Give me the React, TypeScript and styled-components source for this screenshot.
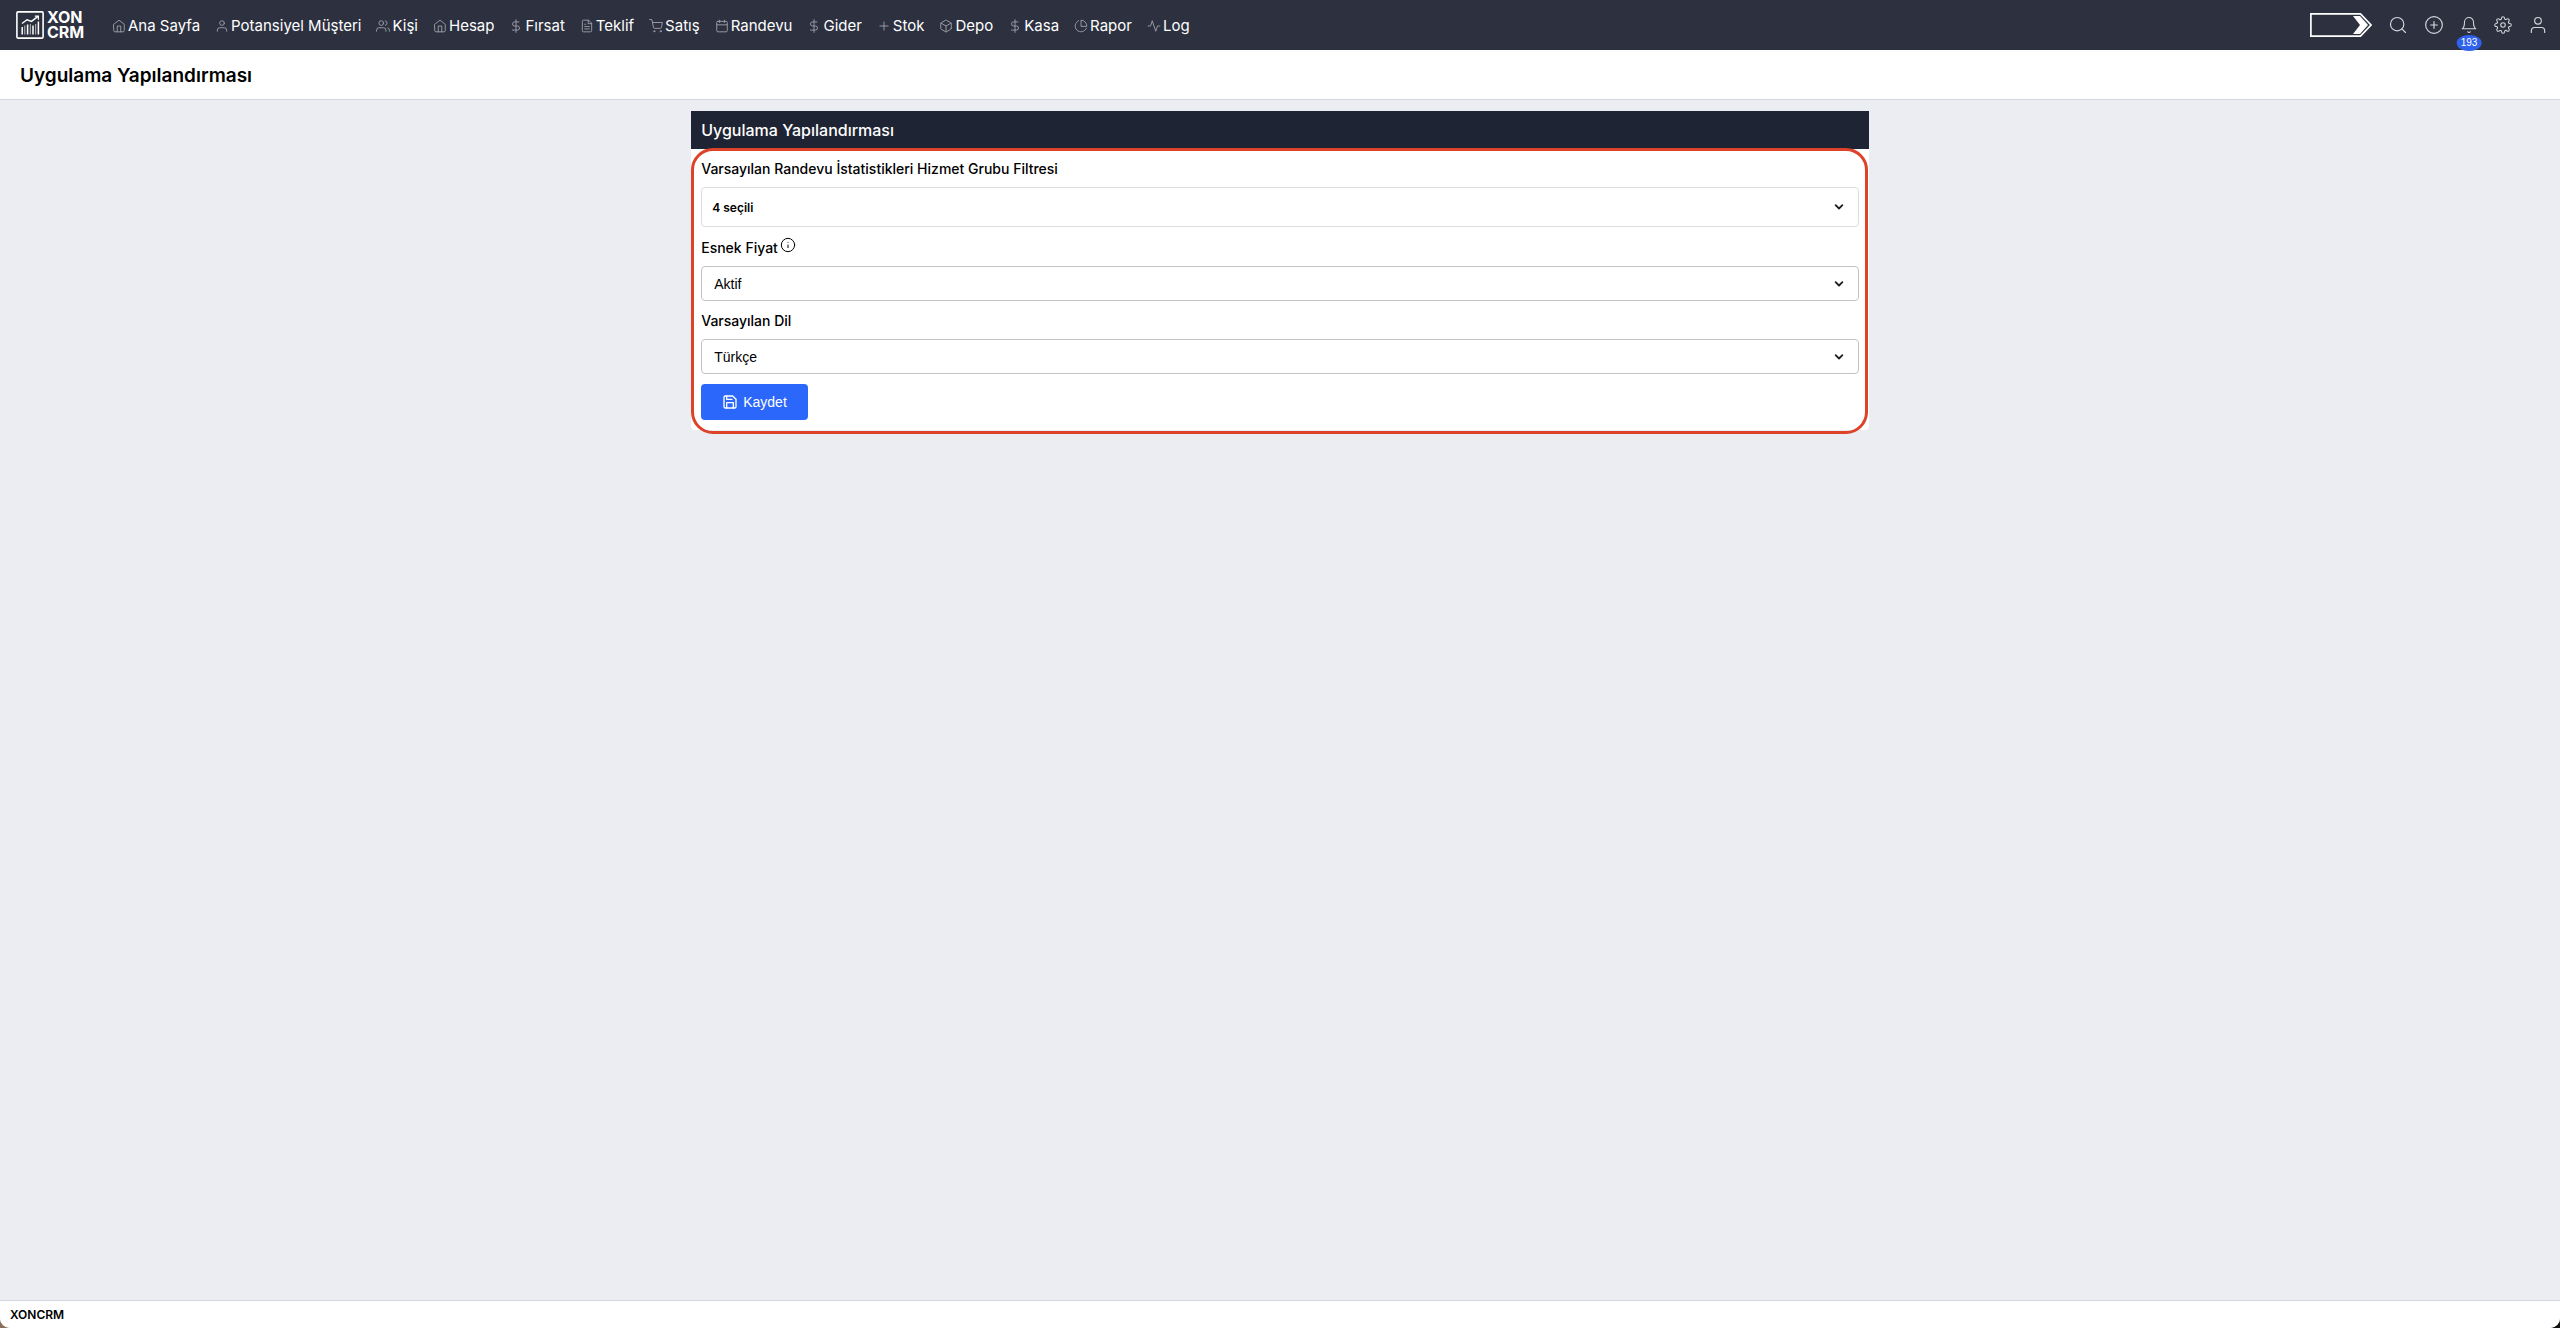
import React from "react";
import styled, { createGlobalStyle } from "styled-components";
import {
  FiHome, FiUser, FiUsers, FiDollarSign, FiFileText, FiShoppingCart, FiCalendar,
  FiPlus, FiBox, FiPieChart, FiActivity, FiSearch, FiPlusCircle, FiBell, FiSettings,
  FiInfo, FiSave,
} from "react-icons/fi";
import type { IconType } from "react-icons";

const sans = `Inter, "Noto Sans", sans-serif`;
const control = `"Liberation Sans", Arial, sans-serif`;

const GlobalStyle = createGlobalStyle`
  *, *::before, *::after { box-sizing: border-box; }
  html { background: linear-gradient(to right, #8a6f5c 50%, #14140f 50%); }
  body { margin: 0; font-family: ${sans}; color: #000; }
`;

const Page = styled.div`
  min-height: 100vh;
  display: flex;
  flex-direction: column;
  background: #ebedf2;
  border-radius: 0 0 10px 10px;
  overflow: hidden;
`;

const TopBar = styled.header`
  display: flex;
  align-items: center;
  height: 50px;
  padding: 0 12px 0 16px;
  background: #2c303f;
  color: #fff;
`;

const Brand = styled.a`
  display: flex;
  align-items: center;
  gap: 3px;
  width: 96px;
  color: #fff;
  text-decoration: none;
  font-size: 16px;
  font-weight: 700;
  line-height: 15px;
`;

const BrandName = styled.span`
  display: flex;
  flex-direction: column;
`;

const Nav = styled.nav`
  display: flex;
  flex: 1;
  gap: 15px;
  padding-top: 2px;
`;

const NavLink = styled.a`
  display: flex;
  align-items: center;
  gap: 2px;
  color: #fff;
  font-size: 15px;
  font-weight: 400;
  line-height: 20px;
  text-decoration: none;
  white-space: nowrap;

  svg { color: #a3a6ae; stroke-width: 1.5; }
`;

const Tools = styled.div`
  display: flex;
  align-items: center;
  gap: 16px;
`;

const ToolButton = styled.button`
  position: relative;
  display: flex;
  padding: 0;
  border: 0;
  background: none;
  color: #d5d7dc;

  svg { stroke-width: 1.4; }
`;

const Badge = styled.span`
  position: absolute;
  top: 19px;
  left: 50%;
  transform: translateX(-50%);
  padding: 0 4px;
  border-radius: 50%;
  background: #2f62ea;
  color: #fff;
  font-size: 10px;
  line-height: 16px;
`;

const TitleBar = styled.div`
  height: 50px;
  padding: 0 20px;
  border-bottom: 1px solid #d3d7dd;
  background: #fff;
`;

const Title = styled.h1`
  margin: 0;
  font-size: 19px;
  font-weight: 600;
  line-height: 52px;
`;

const Main = styled.main`
  flex: 1;
  padding: 11px 0;
`;

const Card = styled.section`
  width: 46%;
  margin: 0 auto;
  background: #fff;
  border-radius: 0 0 4px 4px;
`;

const CardTitle = styled.h2`
  margin: 0;
  padding: 0 10px;
  background: #1e2434;
  color: #fff;
  font-size: 16px;
  font-weight: 500;
  line-height: 38px;
`;

const Form = styled.form`
  position: relative;
  display: flex;
  flex-direction: column;
  padding: 10px;

  &::after {
    content: "";
    position: absolute;
    inset: -1px 1px -4px 0;
    border: 3px solid #dc4328;
    border-radius: 22px;
    pointer-events: none;
  }
`;

const Label = styled.label`
  display: flex;
  align-items: center;
  gap: 2px;
  margin-bottom: 8px;
  font-size: 14px;
  font-weight: 500;
  line-height: 20px;
`;

const InfoIcon = styled(FiInfo)`
  margin-bottom: 5px;
  stroke-width: 1.5;
`;

const MultiSelect = styled.button`
  display: flex;
  align-items: center;
  justify-content: space-between;
  height: 40px;
  margin-bottom: 10px;
  padding: 0 13px 0 10px;
  border: 1px solid #dadde1;
  border-radius: 4px;
  background: #fff;
  color: #000;
  font-family: ${sans};
  font-size: 12px;
  font-weight: 600;
`;

const SelectBox = styled.div`
  position: relative;
  display: flex;
  margin-bottom: 10px;

  svg {
    position: absolute;
    top: 12px;
    right: 14px;
    pointer-events: none;
  }
`;

const Select = styled.select`
  appearance: none;
  width: 100%;
  height: 35px;
  padding: 0 36px 0 12px;
  border: 1px solid #c4c4c4;
  border-radius: 4px;
  background: #fff;
  color: #000;
  font-family: ${control};
  font-size: 14px;
`;

const SaveButton = styled.button`
  display: flex;
  align-items: center;
  align-self: flex-start;
  gap: 5px;
  height: 36px;
  padding: 0 21px;
  border: 0;
  border-radius: 4px;
  background: #2b67fb;
  color: #fff;
  font-family: ${control};
  font-size: 14px;
`;

const Footer = styled.footer`
  padding: 0 10px;
  border-top: 1px solid #d3d7dd;
  background: #fff;
  font-size: 12px;
  font-weight: 600;
  line-height: 27px;
`;

const Chevron = () => (
  <svg width="12" height="12" viewBox="0 0 16 16" fill="none" stroke="#1f1f1f" strokeWidth="2.4" strokeLinecap="round" strokeLinejoin="round" aria-hidden="true">
    <path d="m3.5 5.5 4.5 4.5 4.5-4.5" />
  </svg>
);

const LogoMark = () => (
  <svg width="28" height="28" viewBox="0 0 28 28" fill="none" stroke="#fff" aria-hidden="true">
    <rect x=".9" y=".9" width="26.2" height="26.2" rx="1" strokeWidth="1.6" />
    <path d="M6.2 23.5v-7.5M11.6 23.5V13.5M17 23.5V14.5M22.4 23.5V10.5" strokeWidth="1.5" />
    <path d="M8.8 23.5v-9M14.3 23.5V13M19.7 23.5V13" strokeWidth="0.7" />
    <path d="M6 12.5 11 8.8l4.5 1.6L22 5.4" strokeWidth="1.4" />
    <path d="M18.8 5.2H22.4V8.8" strokeWidth="1.2" />
  </svg>
);

const ArrowTag = () => (
  <svg width="62" height="24" viewBox="0 0 62 24" fill="none" aria-hidden="true">
    <path d="M.9.9H50.5L61 12 50.5 23.1H.9Z" stroke="#fff" strokeWidth="1.7" />
    <path d="M43 3h7l8 9-8 9h-7l7-9Z" fill="#fff" />
  </svg>
);

const navItems: [string, IconType][] = [
  ["Ana Sayfa", FiHome],
  ["Potansiyel Müşteri", FiUser],
  ["Kişi", FiUsers],
  ["Hesap", FiHome],
  ["Fırsat", FiDollarSign],
  ["Teklif", FiFileText],
  ["Satış", FiShoppingCart],
  ["Randevu", FiCalendar],
  ["Gider", FiDollarSign],
  ["Stok", FiPlus],
  ["Depo", FiBox],
  ["Kasa", FiDollarSign],
  ["Rapor", FiPieChart],
  ["Log", FiActivity],
];

export default function App() {
  return (
    <>
      <GlobalStyle />
      <Page>
        <TopBar>
          <Brand href="#">
            <LogoMark />
            <BrandName><span>XON</span><span>CRM</span></BrandName>
          </Brand>
          <Nav>
            {navItems.map(([text, Icon]) => (
              <NavLink href="#" key={text}><Icon size={14} />{text}</NavLink>
            ))}
          </Nav>
          <Tools>
            <ToolButton aria-label="Menü"><ArrowTag /></ToolButton>
            <ToolButton aria-label="Ara"><FiSearch size={20} /></ToolButton>
            <ToolButton aria-label="Ekle"><FiPlusCircle size={20} /></ToolButton>
            <ToolButton aria-label="Bildirimler"><FiBell size={18} /><Badge>193</Badge></ToolButton>
            <ToolButton aria-label="Ayarlar"><FiSettings size={18} /></ToolButton>
            <ToolButton aria-label="Profil"><FiUser size={20} /></ToolButton>
          </Tools>
        </TopBar>
        <TitleBar><Title>Uygulama Yapılandırması</Title></TitleBar>
        <Main>
          <Card>
            <CardTitle>Uygulama Yapılandırması</CardTitle>
            <Form>
              <Label htmlFor="groups">Varsayılan Randevu İstatistikleri Hizmet Grubu Filtresi</Label>
              <MultiSelect id="groups" type="button">4 seçili<Chevron /></MultiSelect>
              <Label htmlFor="price">Esnek Fiyat<InfoIcon size={16} /></Label>
              <SelectBox>
                <Select id="price"><option>Aktif</option></Select>
                <Chevron />
              </SelectBox>
              <Label htmlFor="language">Varsayılan Dil</Label>
              <SelectBox>
                <Select id="language"><option>Türkçe</option></Select>
                <Chevron />
              </SelectBox>
              <SaveButton type="button"><FiSave size={16} />Kaydet</SaveButton>
            </Form>
          </Card>
        </Main>
        <Footer>XONCRM</Footer>
      </Page>
    </>
  );
}
